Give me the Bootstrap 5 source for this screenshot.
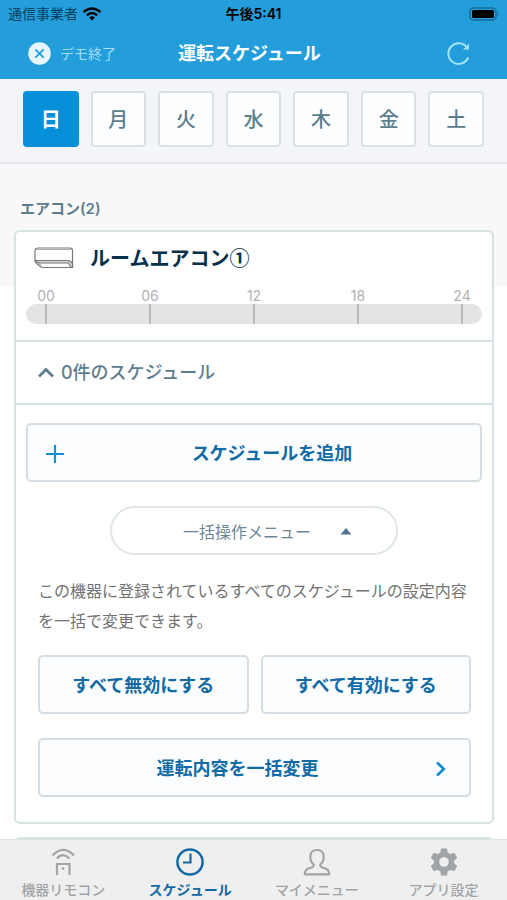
<!DOCTYPE html>
<html lang="ja">
<head>
<meta charset="utf-8">
<meta name="viewport" content="width=device-width, initial-scale=1">
<title>運転スケジュール</title>
<link href="https://cdn.jsdelivr.net/npm/bootstrap@5.3.0/dist/css/bootstrap.min.css" rel="stylesheet">
<style>
:root{--sky:#239edb;--deep:#126ba5;--slate:#5e7d8c;--edge:#d6e2e3}
body{font-family:Inter,"Noto Sans CJK JP",sans-serif;font-size:16px;background:#fff}
svg{display:block;flex:none}
.fs14{font-size:14px}.fs15{font-size:15px}.fs16{font-size:16px}.fs18{font-size:18px}.fs20{font-size:20px}
.w5{font-weight:500}.w6{font-weight:600}.w7{font-weight:700}
.app-head{background:var(--sky)}
.status-row{height:28px;color:#08405f;line-height:20px;padding:0 8px}
.status-row>*,.title-row>*{flex:1 1 0}
.title-row{height:51px;color:#fff;padding:0 36px 0 28px}
.title-row h1{flex:none;margin:0}
.demo-exit{color:#9fdcf8;gap:9px;line-height:20px}
.day-strip{background:#f3f5f9;border-bottom:2px solid #e3e6ed;padding:12px 23px 15px}
.day-grid{display:grid;grid-template-columns:repeat(7,1fr);gap:12px}
.day{height:56px;background:#fcfeff;border:2px solid #dae1e4;border-radius:4px;color:var(--slate);padding:2px 0 0}
.day.on{background:#0790da;border-color:#0790da;color:#fff}
.scroller{scrollbar-width:none;background:linear-gradient(#f8f8f9 0 122px,#fff 122px);padding:32px 13px 0 14px}
.scroller::-webkit-scrollbar{display:none}
.group-label{color:var(--slate);line-height:24px;margin:0 6px;padding:1px 0 9px}
.unit{background:#fff;border:2px solid var(--edge);border-radius:6px}
.unit + .unit{margin-top:13px}
.unit-head{padding:12px 10px 16px;border-bottom:2px solid var(--edge)}
.unit-title{color:#07304d;gap:16px;line-height:28px;padding-left:8px;margin-bottom:16px;font-family:"Noto Sans CJK JP",sans-serif}
.hours{color:#b2b2b4}
.hour{width:40px;line-height:16px}
.bar{height:20px;background:#e4e4e6}
.tick{width:2px;margin:0 19px;background:#bcbcbf}
.fold{height:63px;border:0;border-bottom:2px solid var(--edge);background:#fff;color:var(--slate);padding:0 22px;gap:7px}
.unit-body{padding:18px 10px 25px}
.plate{height:59px;background:#fbfdff;border:2px solid #d5dde2;border-radius:5px;color:var(--deep);padding:2px 0 0}
.plate.add{padding-left:18px}
.plate.bulk{padding-right:22px}
.pill{width:288px;height:49px;border:2px solid #e0e7e8;background:#fff;color:#6b8796;padding:2px 0 0 71px;gap:29px;margin:24px auto 20px}
.bulk-area{padding:0 11px 0 12px}
.bulk-area p{color:#727272;line-height:30px;margin:0;padding:1px 0 19px}
.pair{gap:12px}
.tabs{background:#efefef;border-top:1px solid #dbe3e3;height:61px}
.tab-link{color:#a2a5a7;text-decoration:none;line-height:20px;padding-top:8px;gap:4px}
.tab-link.on{color:var(--deep)}
</style>
<script src="https://cdn.jsdelivr.net/npm/bootstrap@5.3.0/dist/js/bootstrap.bundle.min.js"></script>
</head>
<body>
<div class="d-flex flex-column vh-100">
  <header class="app-head">
    <div class="status-row d-flex align-items-center fs14">
      <div class="d-flex align-items-center gap-1"><span>通信事業者</span>
        <svg width="20" height="14" viewBox="0 0 20 14" fill="none" stroke="#000" stroke-width="2.5"><path d="M1.500 5Q10-2 18.500 5M4.800 8.300Q10 3.800 15.200 8.300"/><path d="M10 13.500L7 10.500Q10 7.800 13 10.500Z" fill="#000" stroke="none"/></svg></div>
      <div class="text-center text-black w6">午後5:41</div>
      <div class="d-flex justify-content-end"><svg width="30" height="15" viewBox="0 0 30 15"><rect x="1" y="1" width="26" height="12" rx="3.500" fill="none" stroke="#176d98" stroke-width="1.500"/><rect x="3" y="3" width="22" height="8" rx="1.500"/><path d="M28.500 5Q30.500 7 28.500 9Z" fill="#176d98"/></svg></div>
    </div>
    <div class="title-row d-flex align-items-center">
      <div class="d-flex"><button type="button" class="demo-exit btn border-0 p-0 d-flex align-items-center fs14">
        <svg width="23" height="23" viewBox="0 0 23 23"><circle cx="11.500" cy="11.500" r="11.200" fill="#e8f7ff"/><path d="M7.300 7.300L15.700 15.700M15.700 7.300L7.300 15.700" stroke="#239edb" stroke-width="1.800"/></svg><span>デモ終了</span></button></div>
      <h1 class="fs18 w7">運転スケジュール</h1>
      <div class="d-flex justify-content-end"><button type="button" class="btn border-0 p-0" aria-label="更新"><svg width="25" height="25" viewBox="0 0 25 25" fill="none" stroke="#a5e1fb" stroke-width="2"><path d="M22.200 16.500A10.300 10.300 0 1 1 21 6.500"/><path d="M23 2.800V8.600H17Z" fill="#a5e1fb" stroke="none"/></svg></button></div>
    </div>
  </header>
  <nav class="day-strip" aria-label="曜日">
    <div class="day-grid">
      <button type="button" class="day on fs20 w7">日</button><button type="button" class="day fs20 w5">月</button><button type="button" class="day fs20 w5">火</button><button type="button" class="day fs20 w5">水</button><button type="button" class="day fs20 w5">木</button><button type="button" class="day fs20 w5">金</button><button type="button" class="day fs20 w5">土</button>
    </div>
  </nav>
  <main class="scroller flex-grow-1 overflow-auto">
    <h2 class="group-label fs15 w6">エアコン(2)</h2>
    <section class="unit">
      <div class="unit-head">
        <h3 class="unit-title d-flex align-items-center fs20 w7">
          <svg width="40" height="22" viewBox="0 0 40 22" fill="#fff" stroke="#77797b" stroke-width="1.200"><path d="M4 1H36Q38.500 1 38.500 3.500V20.500H7.500L2 16Q1 15 1 13V4Q1 1 4 1Z"/><path d="M1.500 13.500H34Q37 13.500 38.500 16.500V20.500H37L34.500 16H4.500L2 14Z" fill="#d4d5d6"/><path d="M5 16L8 20.500M2.500 2.500H37" fill="none" stroke="#a8aaac"/></svg>
          <span>ルームエアコン①</span></h3>
        <div class="hours d-flex justify-content-between text-center fs14">
          <div class="hour">00</div><div class="hour">06</div><div class="hour">12</div><div class="hour">18</div><div class="hour">24</div>
        </div>
        <div class="bar rounded-pill d-flex justify-content-between">
          <div class="tick"></div><div class="tick"></div><div class="tick"></div><div class="tick"></div><div class="tick"></div>
        </div>
      </div>
      <button type="button" class="fold w-100 d-flex align-items-center fs18 w5" aria-expanded="true">
        <svg width="16" height="12" viewBox="0 0 16 12" fill="none" stroke="currentColor" stroke-width="2.800"><path d="M1 9.500L8 2.500L15 9.500"/></svg><span>0件のスケジュール</span></button>
      <div class="unit-body">
        <button type="button" class="plate add w-100 d-flex align-items-center fs18 w7">
          <svg width="18" height="18" viewBox="0 0 18 18" stroke="#0b91d8" stroke-width="2.200"><path d="M9 0V18M0 9H18"/></svg><span class="flex-fill">スケジュールを追加</span></button>
        <button type="button" class="pill rounded-pill d-flex align-items-center fs16" aria-expanded="true"><span>一括操作メニュー</span>
          <svg width="12" height="7" viewBox="0 0 12 7"><path d="M6 0L11.500 6.500H.5Z" fill="#527490"/></svg></button>
        <div class="bulk-area">
          <p class="fs16">この機器に登録されているすべてのスケジュールの設定内容を一括で変更できます。</p>
          <div class="pair d-flex mb-4">
            <button type="button" class="plate flex-fill fs18 w7">すべて無効にする</button>
            <button type="button" class="plate flex-fill fs18 w7">すべて有効にする</button>
          </div>
          <button type="button" class="plate bulk w-100 d-flex align-items-center fs18 w7"><span class="flex-fill">運転内容を一括変更</span>
            <svg width="12" height="16" viewBox="0 0 12 16" fill="none" stroke="#168fd2" stroke-width="2.700"><path d="M2 1.500L8.800 8L2 14.500"/></svg></button>
        </div>
      </div>
    </section>
    <section class="unit">
      <div class="unit-head"><div class="unit-title"></div></div>
    </section>
  </main>
  <nav class="tabs row row-cols-4 g-0 flex-shrink-0" aria-label="メイン">
    <a href="#" class="tab-link col d-flex flex-column align-items-center fs14 w5">
      <svg width="28" height="28" viewBox="0 0 28 28" fill="none" stroke="currentColor" stroke-width="2.200"><path d="M3.500 7.500Q14-3.800 25 7.500M7.800 10.500Q14 3.800 20.500 10.500M8 27V16H20.500V27"/><path d="M12.800 19.300H15.200V21.800H12.800Z" fill="currentColor" stroke="none"/></svg>機器リモコン</a>
    <a href="#" class="tab-link on col d-flex flex-column align-items-center fs14 w7">
      <svg width="28" height="28" viewBox="0 0 28 28" fill="none" stroke="currentColor" stroke-width="2.500"><circle cx="14" cy="14" r="12.600"/><path d="M14.500 5.500V14.500H7" stroke-width="2.200"/></svg>スケジュール</a>
    <a href="#" class="tab-link col d-flex flex-column align-items-center fs14 w5">
      <svg width="28" height="28" viewBox="0 0 28 28" fill="none" stroke="currentColor" stroke-width="2.200" stroke-linejoin="round"><path d="M14 2C9.800 2 7.300 4.500 7.300 8.500C7.300 12 8.200 14.500 10.700 16.500C11.500 19 9 19.500 5.500 20.500C2.500 21.500 1.800 23 1.800 26.300H26.200C26.200 23 25.500 21.500 22.500 20.500C19 19.500 16.500 19 17.300 16.500C19.800 14.500 20.700 12 20.700 8.500C20.700 4.500 18.200 2 14 2Z"/></svg>マイメニュー</a>
    <a href="#" class="tab-link col d-flex flex-column align-items-center fs14 w5">
      <svg width="28" height="28" viewBox="0 0 28 28" fill="currentColor"><path fill-rule="evenodd" d="M11 .5H17L17.700 4.500L20.500 6.100L24.300 4.700L27.300 9.900L24.200 12.400V15.600L27.300 18.100L24.300 23.300L20.500 21.900L17.700 23.500L17 27.500H11L10.300 23.500L7.500 21.900L3.700 23.300L.7 18.100L3.800 15.600V12.400L.7 9.900L3.700 4.700L7.500 6.100L10.300 4.500ZM14 9.200A4.800 4.800 0 1 0 14 18.800A4.800 4.800 0 1 0 14 9.200Z"/></svg>アプリ設定</a>
  </nav>
</div>
</body>
</html>
